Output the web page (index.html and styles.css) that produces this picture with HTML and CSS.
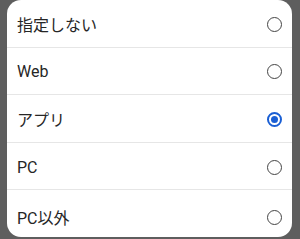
FILE: index.html
```html
<!DOCTYPE html>
<html lang="ja">
<head>
<meta charset="utf-8">
<title>選択</title>
<link rel="stylesheet" href="styles.css">
</head>
<body>
    <div class="dialog">
        <label class="opcao"><span class="rotulo">指定しない</span><span class="radio"></span></label>
        <label class="opcao"><span class="rotulo">Web</span><span class="radio"></span></label>
        <label class="opcao"><span class="rotulo">アプリ</span><span class="radio marcado"></span></label>
        <label class="opcao"><span class="rotulo">PC</span><span class="radio"></span></label>
        <label class="opcao ultima"><span class="rotulo">PC以外</span><span class="radio"></span></label>
    </div>
</body>
</html>
```
FILE: styles.css
```css
*{
    margin:0;
    padding:0;
    box-sizing:border-box;
}
html, body{
    width:300px;
    height:239px;
    overflow:hidden;
}
body{
    background:#5e5e5e;
    font-family:Roboto, "Noto Sans CJK JP", sans-serif;
    color:#262626;
}
.dialog{
    margin-left:7px;
    width:285px;
    height:237px;
    background:#fff;
    border-radius:14px;
    display:flex;
    flex-direction:column;
    overflow:hidden;
}
.opcao{
    flex:none;
    height:47.6px;
    display:flex;
    align-items:center;
    justify-content:space-between;
    padding:2px 10px 0 10px;
    border-bottom:1px solid #e6e6e6;
    font-size:16px;
}
.ultima{
    flex:1;
    border-bottom:none;
    padding-top:7px;
}
.radio{
    width:15px;
    height:15px;
    border:1.6px solid #444;
    border-radius:50%;
    display:flex;
    align-items:center;
    justify-content:center;
}
.marcado{
    border:2px solid #1a5fd4;
}
.marcado::after{
    content:"";
    width:7px;
    height:7px;
    border-radius:50%;
    background:#1a5fd4;
}
```
